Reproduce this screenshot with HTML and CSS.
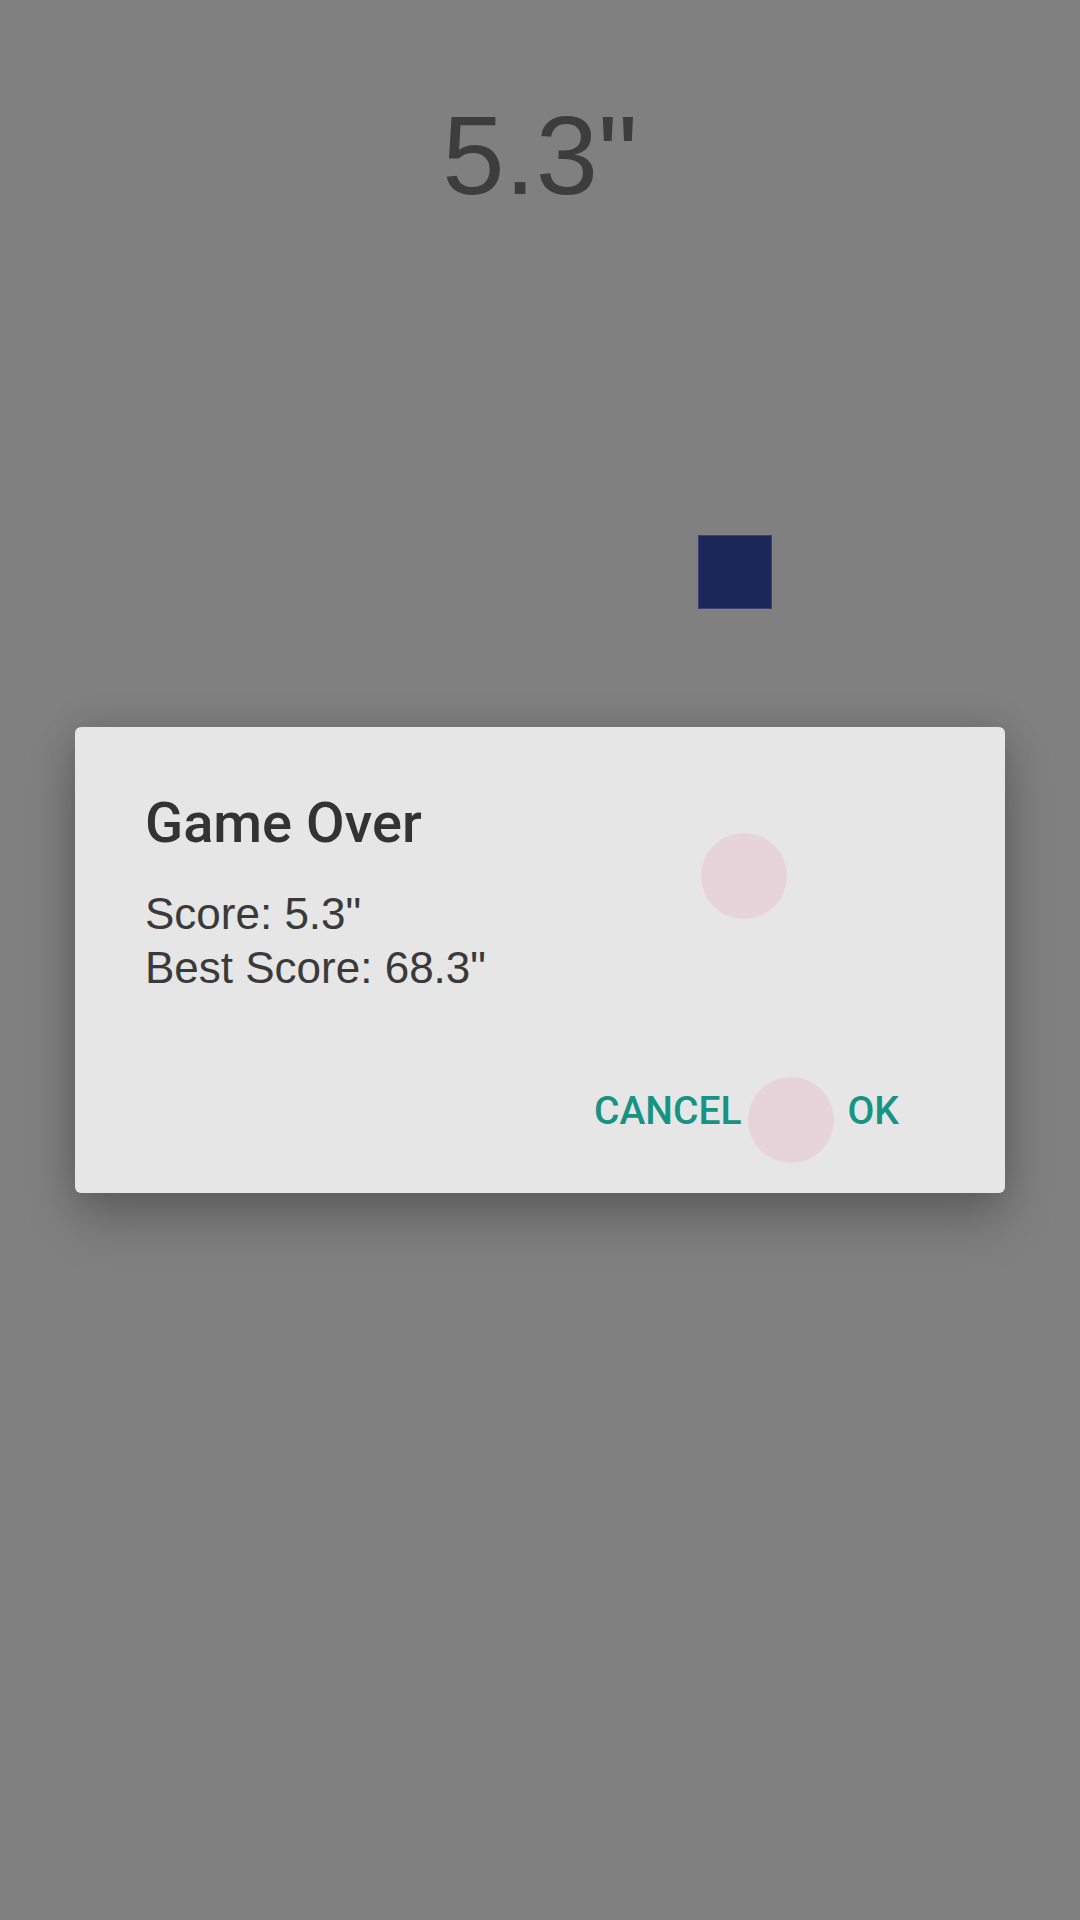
FILE: index.html
```html
<!DOCTYPE html>
<html>
<head>
<meta charset="utf-8">
<link rel="stylesheet" href="styles.css">
</head>
<body>
<div class="screen">
  <div class="timer">5.3"</div>
  <div class="block"></div>
  <div class="dialog">
    <div class="dialog-title">Game Over</div>
    <div class="dialog-body">
      <div class="line">Score: 5.3"</div>
      <div class="line">Best Score: 68.3"</div>
    </div>
    <div class="actions">
      <span class="btn">CANCEL</span>
      <span class="btn">OK</span>
    </div>
    <span class="touch touch-a"></span>
    <span class="touch touch-b"></span>
  </div>
</div>
</body>
</html>
```
FILE: styles.css
```css
html, body {
  margin: 0;
  padding: 0;
  background: #808080;
}
.screen {
  width: 1080px;
  height: 1920px;
  overflow: hidden;
  display: flex;
  flex-direction: column;
}
.timer {
  padding-top: 100px;
  font-family: "Liberation Sans", Arial, sans-serif;
  font-size: 112px;
  line-height: 112px;
  color: #3d3d3d;
  text-align: center;
  padding-left: 0;
}
.block {
  margin-top: 323px;
  margin-left: 698px;
  width: 72px;
  height: 72px;
  background: #1c2759;
  border: 1px solid #3b4470;
}
.dialog {
  position: relative;
  margin-top: 118px;
  margin-left: 75px;
  width: 930px;
  height: 466px;
  box-sizing: border-box;
  padding: 64px 106px 0 70px;
  background: #e6e6e6;
  border-radius: 6px;
  box-shadow: 0 28px 50px rgba(0,0,0,0.22), 0 0 36px rgba(0,0,0,0.14);
  display: flex;
  flex-direction: column;
}
.dialog-title {
  font-family: Roboto, "Liberation Sans", sans-serif;
  font-weight: 500;
  font-size: 56px;
  line-height: 64px;
  color: #333333;
}
.dialog-body {
  margin-top: 32px;
  font-family: "Liberation Sans", Arial, sans-serif;
  font-size: 44px;
  line-height: 54px;
  color: #3a3a3a;
}
.actions {
  margin-top: 92px;
  display: flex;
  justify-content: flex-end;
  gap: 106px;
  font-family: Roboto, "Liberation Sans", sans-serif;
  font-weight: 500;
  font-size: 39px;
  line-height: 48px;
  color: #179384;
}
.touch {
  position: absolute;
  width: 86px;
  height: 86px;
  border-radius: 50%;
  background: #e7d4da;
}
.touch-a {
  left: 626px;
  top: 106px;
}
.touch-b {
  left: 673px;
  top: 350px;
}
```
